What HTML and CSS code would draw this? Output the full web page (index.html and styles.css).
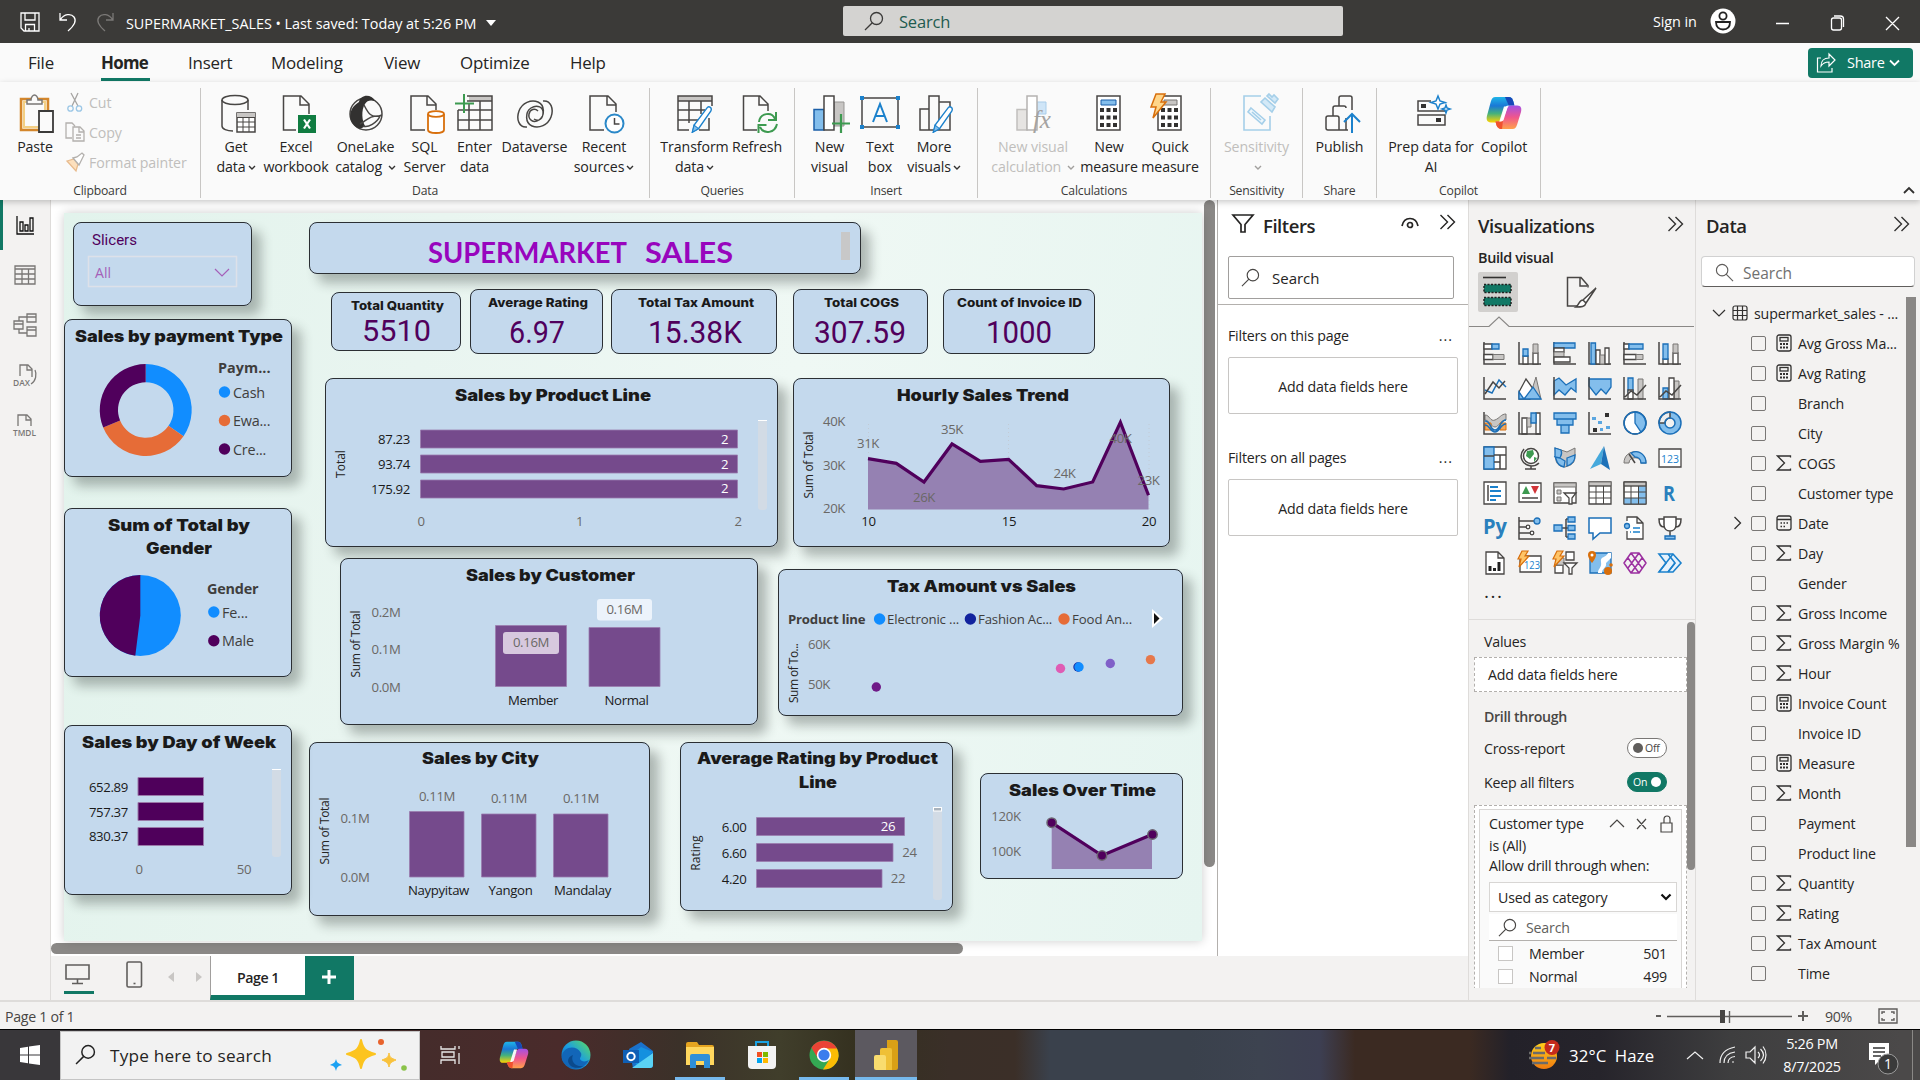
FILE: index.html
```html
<!DOCTYPE html>
<html lang="en">
<head>
<meta charset="utf-8">
<title>SUPERMARKET_SALES</title>
<link rel="stylesheet" href="styles.css">
</head>
<body>
<svg class="defs" width="0" height="0">
  <defs>
    <linearGradient id="cp1" x1="0" y1="0" x2="0" y2="1"><stop offset="0" stop-color="#1fb5e8"/><stop offset=".35" stop-color="#1a78d6"/><stop offset=".65" stop-color="#45b17c"/><stop offset="1" stop-color="#ffd400"/></linearGradient>
    <linearGradient id="cp2" x1="0" y1="0" x2="0" y2="1"><stop offset="0" stop-color="#a350e6"/><stop offset=".5" stop-color="#f0568c"/><stop offset="1" stop-color="#ffa24a"/></linearGradient>
    <linearGradient id="edge" x1="0" y1="1" x2="1" y2="0"><stop offset="0" stop-color="#0c59a4"/><stop offset=".5" stop-color="#1b9de2"/><stop offset="1" stop-color="#5fe05a"/></linearGradient>
    <linearGradient id="haze" x1="0" y1="0" x2="0" y2="1"><stop offset="0" stop-color="#ffcf1a"/><stop offset="1" stop-color="#f07a10"/></linearGradient>
    <symbol id="copilot" viewBox="0 0 38 36">
      <path d="M10 1h14c3 0 4 2 5 5l1 4h-6c-3 0-4 2-5 5l-3 9c-1 3-2 4-5 4H5c-4 0-5-3-4-7L5 6c1-3 2-5 5-5z" fill="url(#cp1)"/>
      <path d="M20 1h4c3 0 4 2 5 5l1 4h-6z" fill="#1748b8"/>
      <path d="M28 35H16c-3 0-4-2-5-4l-1-4h4c3 0 4-2 5-5l3-8c1-3 2-4 5-4h6c4 0 5 3 4 7l-4 13c-1 3-2 5-5 5z" fill="url(#cp2)"/>
      <path d="M10 27h4c2 0 3-1 4-3l-1 11c-4 0-5-2-6-4z" fill="#f0522e"/>
      <path d="M19 11h4l-4 13c0 2-2 3-5 3z" fill="#fff" opacity=".95"/>
    </symbol>
    <symbol id="mag" viewBox="0 0 20 20"><circle cx="12.5" cy="7.5" r="6"/><path d="M8.3 11.8L1 19"/></symbol>
    <symbol id="chev" viewBox="0 0 8 6"><path d="M1 1l3 3 3-3"/></symbol>
    <symbol id="dbl" viewBox="0 0 16 16"><path d="M1 1l7 7-7 7M8 1l7 7-7 7"/></symbol>
    <symbol id="calc" viewBox="0 0 16 18"><rect x="1" y="1" width="14" height="16" rx="2"/><rect x="4" y="3.5" width="8" height="3.5"/><path d="M4 10h2M7 10h2M10 10h2M4 13.5h2M7 13.5h2M10 13.5h2" stroke-width="2"/></symbol>
    <symbol id="sum" viewBox="0 0 16 18"><path d="M14.5 3.5V2h-13l7 7-7 7h13v-1.500"/></symbol>
    <symbol id="cal" viewBox="0 0 16 18"><rect x="1" y="2" width="14" height="14" rx="2"/><path d="M1 5.500h14M4.500 9h1.500M7.500 9H9M10.500 9H12M4.500 12.500h1.500M7.500 12.500H9" stroke-width="1.500"/></symbol>
    <symbol id="pencil" viewBox="0 0 24 32"><path d="M1 31l2-8L18 3c2-2 6 0 4 4L8 27z" fill="#fff" stroke="#1b81cc" stroke-width="1.600"/><path d="M1 31l2-8 5 4z" fill="#83beec" stroke="#1b81cc" stroke-width="1.200"/></symbol>
  </defs>
</svg>

<header class="titlebar">
  <svg class="tb-save" width="20" height="20" viewBox="0 0 20 20"><path d="M1 1h18v18H4l-3-3zM5 1v7h10V1M5.500 19v-6.500h9V19M9 16v3"/></svg>
  <svg class="tb-undo" width="18" height="20" viewBox="0 0 18 20"><path d="M1 1v7h7M1.500 7.500C5 2 12 1 15 5s1 8-6 14"/></svg>
  <svg class="tb-redo" width="18" height="20" viewBox="0 0 18 20"><path d="M17 1v7h-7M16.500 7.500C13 2 6 1 3 5s-1 8 6 14"/></svg>
  <span class="tb-name">SUPERMARKET_SALES • Last saved: Today at 5:26 PM</span>
  <i class="tb-caret"></i>
  <div class="tb-search"><svg width="20" height="20"><use href="#mag"/></svg><span>Search</span></div>
  <span class="tb-sign">Sign in</span>
  <svg class="tb-avatar" width="26" height="26" viewBox="0 0 26 26"><circle cx="13" cy="13" r="12.500" fill="#fff" stroke="none"/><circle cx="13" cy="8" r="3.600"/><path d="M6 14h14c0 5-3 7.500-7 7.500S6 19 6 14z"/></svg>
  <svg class="tb-win" width="126" height="16" viewBox="0 0 126 16"><path d="M1 8.500h13M56.500 5a2 2 0 0 1 2-2h6a2 2 0 0 1 2 2v8a2 2 0 0 1-2 2h-6a2 2 0 0 1-2-2zM59 1h6.500a3 3 0 0 1 3 3v8M111 2l13 13M124 2l-13 13"/></svg>
</header>

<nav class="menu">
  <span class="m1">File</span><span class="m2 active">Home</span><span class="m3">Insert</span><span class="m4">Modeling</span><span class="m5">View</span><span class="m6">Optimize</span><span class="m7">Help</span>
  <div class="share"><svg width="20" height="20" viewBox="0 0 20 20"><path d="M5 5H1.500v14H16v-4M5 13c0-5 3-8 8-8V1l6 6-6 6V9c-4 0-6 1-8 4z"/></svg><span>Share</span><svg width="13" height="9"><use href="#chev"/></svg></div>
</nav>

<section class="ribbon">
  <div class="group g-clip">
    <div class="g-body">
      <div class="rb paste"><svg width="40" height="40" viewBox="0 0 40 40"><path d="M6 5h27v31H6z" fill="#fdf3dc" stroke="#d4862b" stroke-width="2.500"/><path d="M9 8h21v25H9z" fill="#fafafa" stroke="#f3cf84" stroke-width="2"/><path d="M12 10V6h4c0-3 2-5 3.500-5S23 3 23 6h4v4z" fill="#fafafa" stroke="#797775" stroke-width="1.500"/><path d="M24 17h14v21H24z" fill="#fafafa" stroke="#3b3a39" stroke-width="1.800"/></svg><span>Paste</span></div>
      <div class="mini">
        <div><svg width="20" height="20" viewBox="0 0 20 20"><path d="M6 1l7 13M13 1L7 14" stroke="#a6a4a2"/><circle cx="5.500" cy="16.500" r="2.700" stroke="#9cc7e6"/><circle cx="14" cy="16.500" r="2.700" stroke="#9cc7e6"/></svg><span>Cut</span></div>
        <div><svg width="20" height="20" viewBox="0 0 20 20"><path d="M7 16H1V1h6l3 3M8 5h7l4 4v10H8zM14 5v5h5M11 13h5M11 16h5" stroke="#b3b0ad"/></svg><span>Copy</span></div>
        <div><svg width="20" height="20" viewBox="0 0 20 20"><path d="M2 9l7-2 4 5-2 7-9-10z" fill="#fde0bd" stroke="#e8bb8d"/><path d="M8 6l6 7 2-4 3-6-2-2-5 4z" fill="#fff" stroke="#b3b0ad"/></svg><span>Format painter</span></div>
      </div>
    </div>
    <div class="g-label">Clipboard</div>
  </div>
  <div class="group g-data">
    <div class="g-body">
      <div class="rb w56"><svg width="40" height="40" viewBox="0 0 40 40"><ellipse cx="19" cy="6" rx="13" ry="4.500" class="k"/><path d="M6 6v26c0 3 5 5 11 5M32 6v10" class="k"/><path d="M21 19h18v19H21z" class="k" fill="#fff"/><path d="M21 19h18v4H21z" fill="#c8c6c4"/><path d="M21 23.500h18M21 28h18M21 33h18M27 24v14M33 24v14" class="k t1"/></svg><span>Get</span><span>data<svg width="8" height="6"><use href="#chev"/></svg></span></div>
      <div class="rb w64"><svg width="40" height="40" viewBox="0 0 40 40"><path d="M20 36H7.500V2H25l8 8v10M24 2v9h9" class="k"/><path d="M22 21h18v18H22z" fill="#107c41"/><path d="M28 25.500l6 9M34 25.500l-6 9" stroke="#fff" stroke-width="2.200"/></svg><span>Excel</span><span>workbook</span></div>
      <div class="rb w75"><svg width="40" height="40" viewBox="0 0 40 40"><circle cx="20" cy="20" r="16" class="k"/><path d="M13 8c1-7 12-9 16-1-4-1-8-1-10 3-4 6-3 17 0 22-2 2-5 3-7 2C2 29 1 15 13 8z" fill="#323130"/><path d="M18 11c4 8 7 14 18 10M14 30c6-3 10-9 20-8-3 7-12 12-17 10" class="k"/></svg><span>OneLake</span><span>catalog <svg width="8" height="6"><use href="#chev"/></svg></span></div>
      <div class="rb w43"><svg width="40" height="40" viewBox="0 0 40 40"><path d="M20 36H6V2h17l8 8v6M22 2v9h9" class="k"/><path d="M23 20v16c0 1.500 3 3 8 3s8-1.500 8-3V20" fill="#fff" stroke="#d86f0c" stroke-width="1.800"/><ellipse cx="31" cy="20" rx="8" ry="2.800" fill="#fff" stroke="#d86f0c" stroke-width="1.800"/></svg><span>SQL</span><span>Server</span></div>
      <div class="rb w57"><svg width="40" height="40" viewBox="0 0 40 40"><path d="M14 2h23v5H14z" fill="#c8c6c4"/><path d="M12 2h25v34H3V16M12 7h25M3 16h34M3 26h34M14 10v26M25 7v29" class="k"/><path d="M9 0v19M0 9.500h19" stroke="#3d9a50" stroke-width="2"/></svg><span>Enter</span><span>data</span></div>
      <div class="rb w63"><svg width="40" height="40" viewBox="0 0 40 40" class="k"><path d="M12 33C4 34 1 25 4 17S16 5 23 8s7 14 1 18-11-1-10-6 6-6 9-3M28 7c8-1 11 8 8 16S24 35 17 32s-7-14-1-18 13-1 12 6-6 7-9 5"/></svg><span>Dataverse</span></div>
      <div class="rb w76"><svg width="40" height="40" viewBox="0 0 40 40"><path d="M20 36H6V2h18l8 8v8M23 2v9h9" class="k"/><circle cx="30.500" cy="29.500" r="9" fill="#fff" stroke="#2b88c8" stroke-width="2"/><path d="M30.500 24v6h5" class="k"/></svg><span>Recent</span><span>sources<svg width="8" height="6"><use href="#chev"/></svg></span></div>
    </div>
    <div class="g-label">Data</div>
  </div>
  <div class="group g-query">
    <div class="g-body">
      <div class="rb w71"><svg width="40" height="40" viewBox="0 0 40 40"><path d="M3 2h34v5H3z" fill="#c8c6c4"/><path d="M14 36H3V2h34v10M3 7h34M3 16h27M3 26h20M14 7v22M26 7v13M34 24v12H24" class="k"/><svg x="14" y="11" width="26" height="28"><use href="#pencil"/></svg></svg><span>Transform</span><span>data<svg width="8" height="6"><use href="#chev"/></svg></span></div>
      <div class="rb w54"><svg width="40" height="40" viewBox="0 0 40 40"><path d="M20 36H6.500V2H23l8 8v7M22 2v9h9" class="k"/><path d="M22 28c1-9 13-11 16-3M39 18v8h-8M40 30c-2 9-13 11-17 3M21.500 39v-8h8" fill="none" stroke="#3d9a50" stroke-width="2"/></svg><span>Refresh</span></div>
    </div>
    <div class="g-label">Queries</div>
  </div>
  <div class="group g-insert">
    <div class="g-body">
      <div class="rb w55"><svg width="40" height="40" viewBox="0 0 40 40"><path d="M24 8h10v24H24z" fill="#c8c6c4" stroke="#979593"/><path d="M4 15.500h10V36H4z" fill="#83beec" stroke="#1b5fa8" stroke-width="1.500"/><path d="M14 2h10v34H14z" fill="#fff" class="k"/><path d="M31 20v19M22 29.500h18" stroke="#3d9a50" stroke-width="2.200"/></svg><span>New</span><span>visual</span></div>
      <div class="rb w46"><svg width="40" height="40" viewBox="0 0 40 40"><path d="M2 4h36v29H2z" class="k"/><path d="M13 28l7-18 7 18M15.500 22h9" fill="none" stroke="#1b81cc" stroke-width="2"/><path d="M0 2h4v4H0zM36 2h4v4h-4zM0 31h4v4H0zM36 31h4v4h-4z" fill="#1b81cc"/></svg><span>Text</span><span>box</span></div>
      <div class="rb w62"><svg width="40" height="40" viewBox="0 0 40 40"><path d="M6 15h9v21H6zM15 2h10v34H15zM25 8h11v28H25z" class="k"/><svg x="16" y="11" width="26" height="28"><use href="#pencil"/></svg></svg><span>More</span><span>visuals<svg width="8" height="6"><use href="#chev"/></svg></span></div>
    </div>
    <div class="g-label">Insert</div>
  </div>
  <div class="group g-calc">
    <div class="g-body">
      <div class="rb w76 off"><svg width="40" height="40" viewBox="0 0 40 40"><path d="M24 8h9v12h-9z" fill="#cfe5f7" stroke="#a9cdea"/><path d="M4 15.500h10V36H4z" fill="#e6e4e2" stroke="#c1bfbd" stroke-width="1.500"/><path d="M14 2h10v34H14z" fill="#fff" stroke="#b5b3b1" stroke-width="1.500"/><text x="20" y="34" class="fx">fx</text></svg><span>New visual</span><span>calculation <svg width="8" height="6"><use href="#chev"/></svg></span></div>
      <div class="rb w76"><svg width="40" height="40" viewBox="0 0 40 40"><path d="M8 2h23v34H8z" fill="#fff" class="k"/><path d="M12 6h15v5H12z" fill="#83beec" stroke="#1b5fa8"/><path d="M11 16h17M11 23.500h17M11 31h17" stroke="#323130" stroke-width="4" stroke-dasharray="4 2.500"/></svg><span>New</span><span>measure</span></div>
      <div class="rb w46"><svg width="40" height="40" viewBox="0 0 40 40"><path d="M8 2h23v34H8z" fill="#fff" class="k"/><path d="M14 6h13v5H14z" fill="#c8c6c4" stroke="#797775"/><path d="M11 16h17M11 23.500h17M11 31h17" stroke="#323130" stroke-width="4" stroke-dasharray="4 2.500"/><path d="M6 0h9l-4 8h5L3 24l3-11H1z" fill="#ffd68a" stroke="#d86f0c" stroke-width="1.500"/></svg><span>Quick</span><span>measure</span></div>
    </div>
    <div class="g-label">Calculations</div>
  </div>
  <div class="group g-sens">
    <div class="g-body">
      <div class="rb w91 off"><svg width="40" height="40" viewBox="0 0 40 40" fill="none" stroke="#a5cfe9" stroke-width="1.600"><path d="M24 2H7v34h26V22"/><path d="M14 14l14 12-3 4-14-12zM15 18l9 8" fill="#edf6fc"/><path d="M24 8l10 9M28 4l10 9-3 5-11-10zM32 0l3 3 2-2 4 4-3 4-8-7z" fill="#d3e9f7"/></svg><span>Sensitivity</span><span><svg width="8" height="6"><use href="#chev"/></svg></span></div>
    </div>
    <div class="g-label">Sensitivity</div>
  </div>
  <div class="group g-share">
    <div class="g-body">
      <div class="rb w73"><svg width="40" height="40" viewBox="0 0 40 40"><path d="M6 24a2 2 0 0 1 2-2h9a2 2 0 0 1 2 2v12H8a2 2 0 0 1-2-2zM13 22V14a2 2 0 0 1 2-2h9a2 2 0 0 1 2 2M19 12V4a2 2 0 0 1 2-2h9a2 2 0 0 1 2 2v12M26 24v12M19 36h9" class="k"/><path d="M32 39V20M24 28l8-8 8 8" fill="none" stroke="#1b81cc" stroke-width="2"/></svg><span>Publish</span></div>
    </div>
    <div class="g-label">Share</div>
  </div>
  <div class="group g-cop">
    <div class="g-body">
      <div class="rb w90"><svg width="40" height="40" viewBox="0 0 40 40"><path d="M20 7H7v10h27v-3M7 21h27v10H7z" class="k"/><path d="M10 10h5v4h-5zM25 24h5v4h-5z" fill="#323130"/><path d="M27 2l2 5 5 1.500-5 1.500-2 5-2-5-5-1.500L25 7zM35 11l1 3 3 1-3 1-1 3-1-3-3-1 3-1z" fill="#fff" stroke="#1b81cc" stroke-width="1.500"/></svg><span>Prep data for</span><span>AI</span></div>
      <div class="rb w56"><svg width="40" height="40" viewBox="0 0 40 40"><use href="#copilot" x="1" y="2" width="38" height="34"/></svg><span>Copilot</span></div>
    </div>
    <div class="g-label">Copilot</div>
  </div>
  <svg class="collapse" width="12" height="8" viewBox="0 0 12 8"><path d="M1 7l5-5 5 5"/></svg>
</section>

<main class="work">
  <aside class="rail">
    <div class="on"><svg width="24" height="24" viewBox="0 0 24 24"><path d="M4 3v18h17M7 18V9h3v9zM12 18v-6h3v6zM17 18V5h3v13z"/></svg></div>
    <div><svg width="24" height="24" viewBox="0 0 24 24"><path d="M2 3h20v18H2zM2 6h20M2 11h20M2 16h20M9 6v15M15.500 6v15"/></svg></div>
    <div><svg width="24" height="24" viewBox="0 0 24 24"><path d="M1 8h9v8H1zM14 1h9v8h-9zM14 14h9v9h-9zM1 11h9M14 4h9M14 17h9M6 8V4h8M6 16v4h8"/></svg></div>
    <div><svg width="24" height="24" viewBox="0 0 24 24"><path d="M7 13V2h8l4 4v8M14 2v5h5M22 7c2 4 1 11-4 14"/><text x="0" y="23" textLength="17" lengthAdjust="spacingAndGlyphs">DAX</text></svg></div>
    <div><svg width="24" height="24" viewBox="0 0 24 24"><path d="M5 13V2h9l4 4v7M13 2v5h5"/><text x="0" y="23" textLength="23" lengthAdjust="spacingAndGlyphs">TMDL</text></svg></div>
  </aside>

  <div class="center">
    <div class="stage-row">
    <div class="stage">
      <div class="page">
        <svg class="visual v-title" viewBox="309 222 552 52"><g class="comic"><text x="428" y="263" textLength="199" lengthAdjust="spacingAndGlyphs">SUPERMARKET</text><text x="645" y="263" textLength="88" lengthAdjust="spacingAndGlyphs">SALES</text></g><path d="M841 232h9v28h-9z" fill="#c8c8c8"/></svg>
        <svg class="visual v-slicer" viewBox="73 222 179 84"><text x="92" y="245" class="din" textLength="45" lengthAdjust="spacingAndGlyphs">Slicers</text><rect x="88.500" y="256.500" width="148" height="30" fill="none" stroke="#dde1e9" stroke-width="1.500"/><text x="95" y="278" class="all" textLength="16" lengthAdjust="spacingAndGlyphs">All</text><path d="M215 269l7 7 7-7" fill="none" stroke="#a55fb8" stroke-width="1.200"/></svg>
        <svg class="visual flat v-k1" viewBox="331 292 130 59"><text x="351" y="310" class="kt" textLength="93" lengthAdjust="spacingAndGlyphs">Total Quantity</text><text x="362" y="341" class="kv" textLength="69" lengthAdjust="spacingAndGlyphs">5510</text></svg>
        <svg class="visual flat v-k2" viewBox="470 289 133 65"><text x="488" y="307" class="kt" textLength="100" lengthAdjust="spacingAndGlyphs">Average Rating</text><text x="509" y="343" class="kv" textLength="56" lengthAdjust="spacingAndGlyphs">6.97</text></svg>
        <svg class="visual flat v-k3" viewBox="611 289 166 65"><text x="638" y="307" class="kt" textLength="116" lengthAdjust="spacingAndGlyphs">Total Tax Amount</text><text x="648" y="343" class="kv" textLength="94" lengthAdjust="spacingAndGlyphs">15.38K</text></svg>
        <svg class="visual flat v-k4" viewBox="793 289 135 65"><text x="824" y="307" class="kt" textLength="75" lengthAdjust="spacingAndGlyphs">Total COGS</text><text x="814" y="343" class="kv" textLength="92" lengthAdjust="spacingAndGlyphs">307.59</text></svg>
        <svg class="visual flat v-k5" viewBox="943 289 152 65"><text x="957" y="307" class="kt" textLength="125" lengthAdjust="spacingAndGlyphs">Count of Invoice ID</text><text x="986" y="343" class="kv" textLength="66" lengthAdjust="spacingAndGlyphs">1000</text></svg>

        <svg class="visual v-prod" viewBox="325 378 453 169"><text x="455" y="401" class="t" textLength="196" lengthAdjust="spacingAndGlyphs">Sales by Product Line</text>
          <g class="dk end"><text x="410" y="444">87.23</text><text x="410" y="469">93.74</text><text x="410" y="494">175.92</text></g>
          <g class="bar"><path d="M420.500 430h317v18h-317zM420.500 455h317v18h-317zM420.500 480h317v18h-317z"/></g>
          <g class="wh mid"><text x="724.500" y="444">2</text><text x="724.500" y="469">2</text><text x="724.500" y="493">2</text></g>
          <g class="ax mid"><text x="421" y="526">0</text><text x="579.500" y="526">1</text><text x="738" y="526">2</text></g>
          <text class="rot mid" transform="translate(345 464) rotate(-90)">Total</text>
          <rect x="758" y="420" width="9" height="90" rx="3" class="sb"/><path d="M758 420.500h9" stroke="#fff"/></svg>
        <svg class="visual v-hour" viewBox="793 378 377 169"><text x="897" y="401" class="t" textLength="172" lengthAdjust="spacingAndGlyphs">Hourly Sales Trend</text>
          <path d="M868.500 424v86M1008.500 424v86M1149 424v86" stroke="#c2cbd6" stroke-dasharray="1 3"/>
          <path d="M868 509.500V458.700L896.300 463.300 924 482 952 444 980.400 461.300 1008.600 459.300 1036.700 485.700 1063.700 489 1092.700 482 1120.400 422.300 1148.500 495.300V509.500z" class="area"/>
          <path d="M868 458.700L896.300 463.300 924 482 952 444 980.400 461.300 1008.600 459.300 1036.700 485.700 1063.700 489 1092.700 482 1120.400 422.300 1148.500 495.300" class="ln"/>
          <g class="ax mid"><text x="834" y="426">40K</text><text x="834" y="470">30K</text><text x="834" y="513">20K</text><text x="868" y="448">31K</text><text x="952" y="434">35K</text><text x="924" y="502">26K</text><text x="1064.500" y="478">24K</text><text x="1120.500" y="443">40K</text><text x="1148.500" y="485">23K</text></g>
          <g class="dk mid"><text x="868.500" y="526">10</text><text x="1009" y="526">15</text><text x="1149" y="526">20</text></g>
          <text class="rot mid" transform="translate(813 465) rotate(-90)" textLength="67">Sum of Total</text></svg>

        <svg class="visual v-pay" viewBox="64 319 228 158"><text x="75" y="342" class="t" textLength="208" lengthAdjust="spacingAndGlyphs">Sales by payment Type</text>
          <g transform="translate(145.700 410)"><path d="M0-46A46 46 0 0 1 37.800 26.200L22.800 15.800A27.700 27.700 0 0 0 0-27.700z" fill="#118dff"/><path d="M37.800 26.200A46 46 0 0 1-42.500 17.500L-25.600 10.600A27.700 27.700 0 0 0 22.800 15.800z" fill="#e66c37"/><path d="M-42.500 17.500A46 46 0 0 1 0-46V-27.700A27.700 27.700 0 0 0-25.600 10.600z" fill="#50005c"/></g>
          <text x="218" y="373" class="lg b" textLength="52">Paym...</text>
          <circle cx="224.500" cy="392" r="5.700" fill="#118dff"/><circle cx="224.500" cy="420.500" r="5.700" fill="#e66c37"/><circle cx="224.500" cy="449" r="5.700" fill="#50005c"/>
          <g class="lg"><text x="233" y="398">Cash</text><text x="233" y="426">Ewa...</text><text x="233" y="455">Cre...</text></g></svg>
        <svg class="visual v-gen" viewBox="64 508 228 169"><text x="108" y="531" class="t" textLength="142" lengthAdjust="spacingAndGlyphs">Sum of Total by</text><text x="146" y="554" class="t" textLength="66" lengthAdjust="spacingAndGlyphs">Gender</text>
          <g transform="translate(140.300 615.500)"><circle r="40.500" fill="#118dff"/><path d="M0 0V-40.500A40.500 40.500 0 0 0-5 40.200z" fill="#50005c"/></g>
          <text x="207" y="594" class="lg b" textLength="51">Gender</text>
          <circle cx="213.800" cy="612" r="5.700" fill="#118dff"/><circle cx="213.800" cy="640.700" r="5.700" fill="#50005c"/>
          <g class="lg"><text x="222" y="618">Fe...</text><text x="222" y="646">Male</text></g></svg>

        <svg class="visual v-city" viewBox="309 742 341 174"><text x="422" y="764" class="t" textLength="117" lengthAdjust="spacingAndGlyphs">Sales by City</text>
          <g class="bar"><path d="M409.500 811.500h54.500v65.500h-54.500zM481.500 814h54.500v63h-54.500zM553.500 814h54.500v63h-54.500z"/></g>
          <g class="ax mid"><text x="355" y="823">0.1M</text><text x="355" y="882">0.0M</text><text x="437" y="801">0.11M</text><text x="509" y="803">0.11M</text><text x="581" y="803">0.11M</text></g>
          <g class="dk mid"><text x="438.500" y="895">Naypyitaw</text><text x="510.500" y="895">Yangon</text><text x="582.500" y="895">Mandalay</text></g>
          <text class="rot mid" transform="translate(329 831) rotate(-90)" textLength="67">Sum of Total</text></svg>
        <svg class="visual v-cust" viewBox="340 558 418 167"><text x="466" y="581" class="t" textLength="169" lengthAdjust="spacingAndGlyphs">Sales by Customer</text>
          <g class="bar"><path d="M495.500 625.500h71v61h-71zM589 627.500h71v59h-71z"/></g>
          <rect x="503" y="632" width="56" height="22" rx="3" fill="#d7c8de"/><rect x="597" y="599" width="55" height="21.500" rx="3" fill="#ecf3fb"/>
          <g class="ax mid"><text x="386" y="617">0.2M</text><text x="386" y="654">0.1M</text><text x="386" y="692">0.0M</text><text x="531" y="647">0.16M</text><text x="624.500" y="614">0.16M</text></g>
          <g class="dk mid"><text x="533" y="705">Member</text><text x="626.500" y="705">Normal</text></g>
          <text class="rot mid" transform="translate(360 644) rotate(-90)" textLength="67">Sum of Total</text></svg>
        <svg class="visual v-tax" viewBox="778 569 405 147"><text x="887" y="592" class="t" textLength="189" lengthAdjust="spacingAndGlyphs">Tax Amount vs Sales</text>
          <text x="788" y="624" class="lg s b" textLength="77">Product line</text>
          <circle cx="879.600" cy="619" r="5.700" fill="#118dff"/><circle cx="970.400" cy="619" r="5.700" fill="#12239e"/><circle cx="1064" cy="619" r="5.700" fill="#e66c37"/>
          <g class="lg s"><text x="887" y="624" textLength="72">Electronic ...</text><text x="978" y="624" textLength="74">Fashion Ac...</text><text x="1072" y="624" textLength="60">Food An...</text></g>
          <path d="M1152 609v19l11-9.500z" fill="#fff"/><path d="M1154 613v11l5.500-5.500z" fill="#111"/>
          <g class="ax mid"><text x="819" y="649">60K</text><text x="819" y="689">50K</text></g>
          <circle cx="876.300" cy="687" r="4.700" fill="#6f1a87"/><circle cx="1060.500" cy="668.500" r="4.700" fill="#df5cb4"/><circle cx="1078" cy="667" r="4.700" fill="#12239e"/><circle cx="1079" cy="667" r="4.700" fill="#118dff"/><circle cx="1110.300" cy="663.500" r="4.700" fill="#8060c8"/><circle cx="1150.500" cy="659.600" r="4.700" fill="#e6784b"/>
          <text class="rot mid" transform="translate(798 673) rotate(-90)" textLength="60">Sum of To...</text></svg>

        <svg class="visual v-day" viewBox="64 725 228 170"><text x="82" y="748" class="t" textLength="194" lengthAdjust="spacingAndGlyphs">Sales by Day of Week</text>
          <g class="dk end"><text x="128" y="792">652.89</text><text x="128" y="817">757.37</text><text x="128" y="841">830.37</text></g>
          <path d="M138 777.500h65.500v18H138zM138 802.500h65.500v18H138zM138 827.500h65.500v18H138z" fill="#4f005b" stroke="#9b79a8"/>
          <g class="ax mid"><text x="139" y="874">0</text><text x="244" y="874">50</text></g>
          <rect x="272" y="769" width="9" height="88" rx="3" class="sb"/><path d="M272 769.500h9" stroke="#fff"/></svg>
        <svg class="visual v-rate" viewBox="680 742 273 169"><text x="697" y="764" class="t" textLength="241" lengthAdjust="spacingAndGlyphs">Average Rating by Product</text><text x="799" y="788" class="t" textLength="38" lengthAdjust="spacingAndGlyphs">Line</text>
          <g class="dk end"><text x="746.500" y="832">6.00</text><text x="746.500" y="858">6.60</text><text x="746.500" y="884">4.20</text></g>
          <g class="bar"><path d="M756.500 817.500h148v18h-148zM756.500 843.500h136.500v18H756.500zM756.500 869.500h125.500v18H756.500z"/></g>
          <text x="888" y="831" class="wh mid">26</text><g class="ax mid"><text x="909.500" y="857">24</text><text x="898" y="883">22</text></g>
          <text class="rot mid" transform="translate(700 853) rotate(-90)">Rating</text>
          <rect x="933" y="808" width="9" height="92" rx="3" class="sb"/><rect x="933.500" y="807.500" width="8" height="3.500" fill="#a9b3bd" stroke="#fff"/></svg>
        <svg class="visual flat v-time" viewBox="980 773 203 106"><text x="1009" y="796" class="t" textLength="147" lengthAdjust="spacingAndGlyphs">Sales Over Time</text>
          <path d="M1051.700 869V822.700L1102 855.500 1152 834.500V869z" class="area"/><path d="M1051.700 822.700L1102 855.500 1152 834.500" class="ln"/>
          <g fill="#50005c" stroke="#6b6470" stroke-width="1.500"><circle cx="1051.700" cy="822.700" r="4.700"/><circle cx="1102" cy="855.500" r="4.700"/><circle cx="1152.500" cy="834.500" r="4.700"/></g>
          <g class="ax mid"><text x="1006" y="821">120K</text><text x="1006" y="856">100K</text></g></svg>
      </div>
      <div class="hscroll"></div>
    </div>
    <div class="vscroll"></div>
    <aside class="filters">
      <div class="f-head"><svg width="22" height="19" viewBox="0 0 22 19"><path d="M1 1h20l-8 9.500V18H9v-7.500z"/></svg><h2>Filters</h2><svg class="eye" width="18" height="12" viewBox="0 0 18 12"><path d="M1 9C3-1 15-1 17 9"/><circle cx="9" cy="8" r="2.500"/></svg><svg class="dbl" width="17" height="16"><use href="#dbl"/></svg></div>
      <div class="f-search"><svg width="19" height="19"><use href="#mag"/></svg><span>Search</span></div>
      <div class="f-line"></div>
      <div class="f-sec"><span>Filters on this page</span><b>...</b></div>
      <div class="f-box">Add data fields here</div>
      <div class="f-sec s2"><span>Filters on all pages</span><b>...</b></div>
      <div class="f-box">Add data fields here</div>
    </aside>
    </div>
    <div class="tabs">
      <div class="view"><svg width="26" height="22" viewBox="0 0 26 22"><path d="M1 1h23v14H1zM12.500 15v4M7 19.500h11"/></svg></div>
      <svg class="phone" width="17" height="27" viewBox="0 0 17 27"><rect x="1" y="1" width="14.500" height="25" rx="1.500"/><path d="M7.500 22.500h2"/></svg>
      <i class="al"></i><i class="ar"></i>
      <div class="tab">Page 1</div><div class="plus"><svg width="14" height="14" viewBox="0 0 14 14"><path d="M7 0v14M0 7h14"/></svg></div>
    </div>
  </div>

  <aside class="viz">
    <div class="p-head"><h2>Visualizations</h2><svg class="dbl" width="17" height="16"><use href="#dbl"/></svg></div>
    <h3>Build visual</h3>
    <div class="v-tabs">
      <div class="sel"><svg width="34" height="34" viewBox="0 0 34 34"><path d="M2 2.500h23" stroke="#323130" stroke-width="1.600"/><path d="M3 9.500h27v8H3zM3 22.500h27v8H3z" fill="#117865" stroke="#222" stroke-width="1.500" stroke-dasharray="2 1.500"/></svg></div>
      <svg class="brush" width="32" height="32" viewBox="0 0 32 32"><path d="M11 30H1.500V1.500H15l7 8v2M14 2v8h7" class="k"/><path d="M30 12L17 24l3 3zM17 24c-4 0-4 5-7 7 5 0 9 0 10-4" class="k" fill="#fff"/></svg>
    </div>
    <svg class="notch" width="225" height="11" viewBox="0 0 225 11"><path d="M0 10.500h20L30 1l10 9.500h185"/></svg>
    <div class="v-grid">
      <svg viewBox="0 0 24 24"><path d="M1 1v22h22" class="k"/><path d="M1 3h8v5H1z" class="w"/><path d="M9 3h7v5H9z" class="bl"/><path d="M1 13.500h9v5H1z" class="w"/><path d="M10 13.500h11v5H10z" class="g"/></svg>
      <svg viewBox="0 0 24 24"><path d="M1 1v22h22" class="k"/><path d="M5 15h5v8H5zM15 12h5v11h-5z" class="w"/><path d="M5 8h5v7H5z" class="bl"/><path d="M15 3h5v9h-5z" class="g"/></svg>
      <svg viewBox="0 0 24 24"><path d="M1 1v22h22" class="k"/><path d="M1 2h21v5H1z" class="bl"/><path d="M1 7h10v4H1z" class="w"/><path d="M1 11h10v5H1z" class="g"/><path d="M1 16h16v5H1z" class="w"/></svg>
      <svg viewBox="0 0 24 24"><path d="M1 1v22h22" class="k"/><path d="M3 2h4.500v21H3z" class="bl"/><path d="M8 9h4v14H8z" class="w"/><path d="M12 14h5v9h-5z" class="g"/><path d="M17 7h4v16h-4z" class="w"/></svg>
      <svg viewBox="0 0 24 24"><path d="M1 1v22h22" class="k"/><path d="M1 3h5v5H1zM1 13.500h12v5H1z" class="w"/><path d="M6 3h14v5H6z" class="bl"/><path d="M13 13.500h7v5h-7z" class="g"/></svg>
      <svg viewBox="0 0 24 24"><path d="M1 1v22h22" class="k"/><path d="M5 18h5v5H5zM15 12h5v11h-5z" class="w"/><path d="M5 3h5v15H5z" class="bl"/><path d="M15 3h5v9h-5z" class="g"/></svg>

      <svg viewBox="0 0 24 24"><path d="M1 1v22h22" class="k"/><path d="M2 14l7 3 7-13 7 7" class="bs"/><path d="M2 18l8-12 6 6 6-7" class="k"/></svg>
      <svg viewBox="0 0 24 24"><path d="M11 23L18 1l5 22z" class="g"/><path d="M1 16L8 3l8 11-4 9H1z" class="w"/><path d="M1 16l5 7H1zM6 23l9-12 8 12z" class="bl"/></svg>
      <svg viewBox="0 0 24 24"><path d="M1 5l5-3 7 7 10-6v13l-5-4-6 7-6-5-5 5z" class="bl"/><path d="M1 1v22h22" class="k"/></svg>
      <svg viewBox="0 0 24 24"><path d="M1 3h22v8l-5 7-5-5-5 6-7-9z" class="bl"/><path d="M1 1v22h22" class="k"/></svg>
      <svg viewBox="0 0 24 24"><path d="M15 3h5v20h-5z" class="g"/><path d="M5 2h5v14H5z" class="bl"/><path d="M5 14h5v9H5z" class="w"/><path d="M1 1v22h22M2 21l6-6 6 4 9-10" class="k"/></svg>
      <svg viewBox="0 0 24 24"><path d="M16 5h5v18h-5z" class="g"/><path d="M5 12h5v11H5z" class="bl"/><path d="M11 2h5v21h-5z" class="w"/><path d="M1 1v22h22M2 21l6-6 6 4 9-10" class="k"/></svg>

      <svg viewBox="0 0 24 24"><path d="M2 4c5 0 5 7 10 5s6-6 11-6v6c-6 0-7 7-11 7S6 9 2 9z" class="g"/><path d="M2 12h6v7H2zM17 12h6v7h-6z" fill="#f2a65a" stroke="#d86f0c"/><path d="M2 10c6 0 5 9 10 9s5-10 11-10M2 14c5 0 5 7 10 7s5-8 11-8" class="bs"/><path d="M1 1v22h22" class="k"/></svg>
      <svg viewBox="0 0 24 24"><path d="M4 7h5v16H4zM18 2h4v21h-4z" class="w"/><path d="M9 7h4v9H9z" class="g"/><path d="M13 2h5v10h-5z" class="bl"/><path d="M1 1v22h22" class="k"/></svg>
      <svg viewBox="0 0 24 24"><path d="M1 2h22v6H1zM4 8h16v6H4zM8 14h8v8H8z" class="bl"/></svg>
      <svg viewBox="0 0 24 24"><path d="M1 1v22h22" class="k"/><path d="M5 17h4v4H5zM17 2h4v4h-4z" fill="#323130"/><path d="M4 6h4v3H4zM10 10h4v3h-4zM18 15h4v3h-4zM12 17h3v3h-3z" fill="#5aa6e0"/></svg>
      <svg viewBox="0 0 24 24"><circle cx="12" cy="12" r="11" class="w"/><path d="M12 1a11 11 0 0 1 6 20l-6-9z" class="bl"/><circle cx="12" cy="12" r="11" class="bs"/></svg>
      <svg viewBox="0 0 24 24"><circle cx="12" cy="12" r="8" fill="none" stroke="#83beec" stroke-width="6"/><path d="M12 1a11 11 0 0 0-11 11h6a5 5 0 0 1 5-5z" fill="#eee" class="k"/><circle cx="12" cy="12" r="11" class="bs"/><circle cx="12" cy="12" r="5" class="bs"/></svg>

      <svg viewBox="0 0 24 24"><path d="M1 1h22v22H1z" class="w"/><path d="M1 1h10v22H1z" class="bl"/><path d="M1 10h10M11 9h12M17 9v14M11 16h6" class="k"/></svg>
      <svg viewBox="0 0 24 24"><circle cx="13" cy="10" r="7.500" fill="#fff" class="k"/><path d="M9 5l6-1 1 4-4 5-4-3zM16 11l3 1-3 4z" fill="#3d9a50"/><path d="M6 3c-6 7-2 16 7 17 4 0 6-1 8-3M13 20v3M7 23h11" class="k"/></svg>
      <svg viewBox="0 0 24 24"><path d="M2 2l6 2 6 2 8-4v8c0 7-3 9-10 11C5 20 2 17 3 10z" class="g"/><path d="M2 2l6 2c2 4-1 7-1 8l-5-1zM2 11l5 1 5 3-1 6c-5-1-7-4-8-8zM14 12l8-3c0 6-2 9-8 11z" class="bl"/></svg>
      <svg viewBox="0 0 24 24"><path d="M16 0L2 23l11-5z" fill="#45a9dc"/><path d="M16 0l6 24-9-6z" fill="#1d71b8"/></svg>
      <svg viewBox="0 0 24 24"><path d="M1 17C1 2 23 2 23 17h-5c0-7-12-7-12 0z" class="g"/><path d="M8 7c8-4 15 2 15 10h-5c0-4-3-6-6-6z" class="bl"/><path d="M6 8l6 9" class="k"/></svg>
      <svg viewBox="0 0 24 24"><path d="M1 3h22v18H1z" class="w"/><text x="3" y="17" class="n" textLength="18" lengthAdjust="spacingAndGlyphs">123</text></svg>

      <svg viewBox="0 0 24 24"><path d="M1 1h22v22H1z" class="w"/><path d="M5 4v16" class="k"/><path d="M7 6h8M7 10h11M7 15h11M7 19h6" stroke="#1b81cc" stroke-width="2"/></svg>
      <svg viewBox="0 0 24 24"><path d="M1 2h22v19H1z" class="w"/><path d="M4 13l4-8 4 8z" fill="#3d9a50"/><path d="M13 5h8l-4 8z" fill="#d13438"/><path d="M4 17h16" class="k"/></svg>
      <svg viewBox="0 0 24 24"><path d="M1 2h22v20H1z" class="w"/><path d="M1 2h22v4H1zM4 9h4v4H4zM4 16h4v4H4z" class="g"/><path d="M11 12h12l-4 5v6h-3v-6z" class="w"/></svg>
      <svg viewBox="0 0 24 24"><path d="M1 1h22v22H1z" class="w"/><path d="M1 1h22v4H1z" class="g"/><path d="M1 11h22M1 17h22M8 5v18M15.500 5v18M1 5h22" class="k t1"/></svg>
      <svg viewBox="0 0 24 24"><path d="M1 1h22v22H1z" class="w"/><path d="M15 5h8v18H1v-6h14z" fill="#83beec"/><path d="M1 1h22v4H1z" class="g"/><path d="M1 11h22M1 17h22M8 5v18M15.500 5v18M1 5h22M1 1h22v22H1z" class="k t1"/></svg>
      <svg viewBox="0 0 24 24"><text x="5" y="20" class="r" textLength="12" lengthAdjust="spacingAndGlyphs">R</text></svg>

      <svg viewBox="0 0 24 24"><text x="0" y="18" class="r" textLength="24" lengthAdjust="spacingAndGlyphs">Py</text></svg>
      <svg viewBox="0 0 24 24"><path d="M1 1v22h22M1 5h16M1 11h8M1 17h12" class="k"/><circle cx="19" cy="5" r="3" class="bl"/><circle cx="10" cy="11" r="1.800" class="w"/><circle cx="14" cy="17" r="1.800" class="w"/></svg>
      <svg viewBox="0 0 24 24"><path d="M9 12h6M13 3v18M13 3h3M13 21h3" class="k"/><path d="M1 9h8v6H1zM15 1h7v5h-7zM15 9.500h7v5h-7zM15 18h7v5h-7z" class="bl"/></svg>
      <svg viewBox="0 0 24 24"><path d="M1 2h22v15H12l-7 6v-6H1z" class="bs wf"/></svg>
      <svg viewBox="0 0 24 24"><path d="M4 5V1h10l6 6v16H4v-8M14 1v6h6" class="w"/><circle cx="4" cy="10" r="2.500" class="bl"/><path d="M10 12h7M10 16h7M7 16h1" stroke="#1b81cc" stroke-width="1.600"/></svg>
      <svg viewBox="0 0 24 24"><path d="M6 1h12v8c0 8-12 8-12 0zM6 3H1c0 7 3 8 5 8M18 3h5c0 7-3 8-5 8M12 15v5" class="k" fill="#fff"/><path d="M7 20h10v3H7z" class="bl"/></svg>

      <svg viewBox="0 0 24 24"><path d="M3 1h12l6 6v16H3zM15 1v6h6" class="w"/><path d="M7 20v-5M11.500 20v-3M16 20v-9" stroke="#222" stroke-width="3"/></svg>
      <svg viewBox="0 0 24 24"><path d="M2 5h21v16H2z" class="w"/><text x="6" y="18" class="n" textLength="16" lengthAdjust="spacingAndGlyphs">123</text><path d="M4 0h6l-3 5h4L1 16l2-8H0z" class="o"/></svg>
      <svg viewBox="0 0 24 24"><path d="M13 1h8v8h-8zM2 14h8v8H2z" class="w"/><path d="M4 7h7v7H4z" class="g"/><path d="M11 12h13l-5 5v6h-3v-6z" class="w"/><path d="M4 0h6l-3 5h4L1 16l2-8H0z" class="o"/></svg>
      <svg viewBox="0 0 24 24"><path d="M2 2h21v20H2z" class="bl"/><path d="M20 2c-2 5-8 3-7 9s-3 6-3 11h4c0-5 5-5 4-10l5-5V2z" fill="#fff"/><path d="M0 4a4 4 0 0 1 8 0c0 3-4 8-4 8S0 7 0 4z" fill="#d86f0c"/><circle cx="20" cy="20" r="4" fill="#d86f0c"/><circle cx="23" cy="14" r="1.800" fill="#d86f0c"/><circle cx="4" cy="4" r="1.500" fill="#fff"/></svg>
      <svg viewBox="0 0 24 24" fill="none" stroke="#9b30a0" stroke-width="1.500" stroke-linejoin="round"><path d="M8 2h8l7 10-7 10H8L1 12zM8 2l11 15M16 2L5 17M5 7l11 15M19 7L8 22"/></svg>
      <svg viewBox="0 0 24 24"><path d="M1 3h9l7 9-7 9H1l7-9zM9 3h6l8 9-8 9H9" fill="#e6f2fc" stroke="#1b81cc" stroke-width="1.600"/><path d="M1 21L15 3M10 21l7-9" stroke="#1b81cc" stroke-width="1.500"/></svg>
    </div>
    <div class="v-more">...</div>
    <div class="v-fields">
      <div class="vf-col">
        <p class="lbl">Values</p>
        <div class="dash">Add data fields here</div>
        <p class="lbl dt">Drill through</p>
        <div class="opt"><span>Cross-report</span><span class="tog"><i></i>Off</span></div>
        <div class="opt"><span>Keep all filters</span><span class="tog on">On<i></i></span></div>
        <div class="drill"><div class="d-card">
          <div class="d-top"><span>Customer type</span><svg width="64" height="18" viewBox="0 0 64 18"><path d="M1 12l7-7 7 7M28 4l9 10M37 4l-9 10M52 8h11v9H52zM55 8V4c0-4 6-4 6 0v4"/></svg></div>
          <p>is (All)</p><p class="al2">Allow drill through when:</p>
          <div class="select"><span>Used as category</span><svg width="12" height="9"><use href="#chev"/></svg></div>
          <div class="d-search"><svg width="19" height="19"><use href="#mag"/></svg><span>Search</span></div>
          <div class="ck"><i></i><span>Member</span><b>501</b></div>
          <div class="ck"><i></i><span>Normal</span><b>499</b></div>
        </div></div>
      </div>
      <div class="v-scroll"></div>
    </div>
  </aside>

  <aside class="data">
    <div class="p-head"><h2>Data</h2><svg class="dbl" width="17" height="16"><use href="#dbl"/></svg></div>
    <div class="d-find"><svg width="19" height="19" class="flip"><use href="#mag"/></svg><span>Search</span></div>
    <div class="d-body">
      <div class="tree">
        <div class="root"><svg width="14" height="9" viewBox="0 0 14 9"><path d="M1 1l6 6 6-6"/></svg><svg width="16" height="16" viewBox="0 0 16 16" class="tbl"><rect x="1" y="1" width="14" height="14" rx="2"/><path d="M1 5.500h14M1 10.500h14M5.500 1v14M10.500 1v14"/></svg><span>supermarket_sales - ...</span></div>
        <div class="row"><i></i><svg><use href="#calc"/></svg><span>Avg Gross Ma...</span></div>
        <div class="row"><i></i><svg><use href="#calc"/></svg><span>Avg Rating</span></div>
        <div class="row"><i></i><svg></svg><span>Branch</span></div>
        <div class="row"><i></i><svg></svg><span>City</span></div>
        <div class="row"><i></i><svg><use href="#sum"/></svg><span>COGS</span></div>
        <div class="row"><i></i><svg></svg><span>Customer type</span></div>
        <div class="row exp"><svg class="ex" viewBox="0 0 8 14"><path d="M1 1l6 6-6 6"/></svg><i></i><svg><use href="#cal"/></svg><span>Date</span></div>
        <div class="row"><i></i><svg><use href="#sum"/></svg><span>Day</span></div>
        <div class="row"><i></i><svg></svg><span>Gender</span></div>
        <div class="row"><i></i><svg><use href="#sum"/></svg><span>Gross Income</span></div>
        <div class="row"><i></i><svg><use href="#sum"/></svg><span>Gross Margin %</span></div>
        <div class="row"><i></i><svg><use href="#sum"/></svg><span>Hour</span></div>
        <div class="row"><i></i><svg><use href="#calc"/></svg><span>Invoice Count</span></div>
        <div class="row"><i></i><svg></svg><span>Invoice ID</span></div>
        <div class="row"><i></i><svg><use href="#calc"/></svg><span>Measure</span></div>
        <div class="row"><i></i><svg><use href="#sum"/></svg><span>Month</span></div>
        <div class="row"><i></i><svg></svg><span>Payment</span></div>
        <div class="row"><i></i><svg></svg><span>Product line</span></div>
        <div class="row"><i></i><svg><use href="#sum"/></svg><span>Quantity</span></div>
        <div class="row"><i></i><svg><use href="#sum"/></svg><span>Rating</span></div>
        <div class="row"><i></i><svg><use href="#sum"/></svg><span>Tax Amount</span></div>
        <div class="row"><i></i><svg></svg><span>Time</span></div>
      </div>
      <div class="d-scroll"></div>
    </div>
  </aside>
</main>

<footer class="status"><span>Page 1 of 1</span><svg width="152" height="20" viewBox="0 0 152 20"><path d="M0 10h5" stroke-width="2"/><path d="M11 10.500h125M73.500 5v12"/><path d="M64 4h5v13h-5z" fill="#484644" stroke="none"/><path d="M142 10h10M147 5v10" stroke-width="2"/></svg><span class="pct">90%</span><svg width="20" height="16" viewBox="0 0 20 16" class="fit"><path d="M1 1h18v14H1z"/><path d="M4 6V4h3M13 4h3v2M4 10v2h3M13 12h3v-2"/></svg></footer>

<footer class="taskbar">
  <div class="start"><svg width="20" height="20" viewBox="0 0 20 20"><path d="M0 3l8-1.300V9.500H0zM9 1.500L20 0v9.500H9zM0 10.500h8v7.800L0 17zM9 10.500h11V20L9 18.500z" fill="#fff"/></svg></div>
  <div class="t-search"><svg width="21" height="21" class="m"><use href="#mag"/></svg><span>Type here to search</span>
    <svg width="78" height="32" viewBox="0 0 78 32"><path d="M30 1c2 9 4 11 14 14-10 3-12 5-14 14-2-9-4-11-14-14 10-3 12-5 14-14z" fill="#fcc41f" stroke="#fcc41f" stroke-width="2" stroke-linejoin="round"/><path d="M58 14c1 5 2 5 7 7-5 2-6 3-7 7-1-4-2-5-7-7 5-2 6-2 7-7z" fill="#f9c23c" stroke="#f9c23c"/><path d="M5 20c1 4 2 4 6 6-4 1-5 2-6 6-1-4-2-5-6-6 4-2 5-2 6-6z" fill="#1ba1f2"/><circle cx="50" cy="3" r="3" fill="#e8632d"/><circle cx="73" cy="29" r="2.800" fill="#8bc34a"/></svg></div>
  <svg class="tv" width="22" height="20" viewBox="0 0 22 20"><path d="M1 1v3h14V1M1 19v-4h14v4M2 7h12v5H2zM19 1v3M19 8v11"/></svg>
  <div class="apps">
    <div><svg width="30" height="28"><use href="#copilot"/></svg></div>
    <div><svg width="30" height="30" viewBox="0 0 30 30"><circle cx="15" cy="15" r="14.500" fill="url(#edge)"/><path d="M1 16c1-9 14-12 19-3 1 3-1 4-1 6 1 3 6 3 9 1-4 8-13 11-20 7C3 24 0 20 1 16z" fill="#1266b8"/><path d="M12 15c-3 6 3 13 11 11-8 4-15 1-16-5 0-3 2-5 5-6z" fill="#0b4a8c"/></svg></div>
    <div><svg width="30" height="28" viewBox="0 0 30 28"><path d="M6 8L18 1l12 9v14a3 3 0 0 1-3 3H10z" fill="#1a72cc"/><path d="M8 14l10-8 12 5-16 14z" fill="#1490df"/><path d="M30 12v12a3 3 0 0 1-3 3H9z" fill="#5ad3f5"/><path d="M0 9h16v13H0z" fill="#0f5fb5"/><circle cx="8" cy="15.500" r="3.700" fill="none" stroke="#fff" stroke-width="2"/></svg></div>
    <div><svg width="30" height="26" viewBox="0 0 30 26"><path d="M1 2a2 2 0 0 1 2-2h9l2 3h13a2 2 0 0 1 2 2v17H1z" fill="#e5a420"/><path d="M1 5h28v18H1z" fill="#ffd75e"/><path d="M5 26V14a2 2 0 0 1 2-2h16a2 2 0 0 1 2 2v12h-6v-7h-8v7z" fill="#2f8fd8"/></svg></div>
    <div><svg width="30" height="30" viewBox="0 0 30 30"><path d="M9 7V2h12v5" fill="none" stroke="#1ba1e2" stroke-width="2"/><path d="M1 6h28v19a4 4 0 0 1-4 4H5a4 4 0 0 1-4-4z" fill="#f3f3f3"/><path d="M10 12h5v5h-5z" fill="#f25022"/><path d="M16 12h5v5h-5z" fill="#7fba00"/><path d="M10 18h5v5h-5z" fill="#00a4ef"/><path d="M16 18h5v5h-5z" fill="#ffb900"/></svg></div>
    <div><svg width="30" height="30" viewBox="0 0 30 30"><circle cx="15" cy="15" r="14.500" fill="#34a853"/><path d="M2.500 7.800a14.500 14.500 0 0 1 25 0L28 9H15L9 18.500z" fill="#ea4335"/><path d="M15 8.500h13A14.500 14.500 0 0 1 14 29.500l7-11z" fill="#fbbc04"/><circle cx="15" cy="15" r="7.200" fill="#fff"/><circle cx="15" cy="15" r="5.600" fill="#3b7ded"/></svg></div>
    <div class="sel"><svg width="24" height="30" viewBox="0 0 24 30"><path d="M13 0h9a2 2 0 0 1 2 2v26a2 2 0 0 1-2 2h-9z" fill="#d9a016"/><path d="M6 10a2 2 0 0 1 2-2h8a2 2 0 0 1 2 2v20H6z" fill="#efc036"/><path d="M0 17a2 2 0 0 1 2-2h8a2 2 0 0 1 2 2v13H2a2 2 0 0 1-2-2z" fill="#f9dc6e"/></svg></div>
  </div>
  <div class="tray">
    <svg class="hz" width="32" height="30" viewBox="0 0 32 30"><circle cx="15" cy="16" r="13" fill="url(#haze)"/><path d="M6 8h6M4 13h12M0 18h15M18 18h9M3 23h16M0 13h2" stroke="#6b6b6b" stroke-width="2.500"/><circle cx="23" cy="7.500" r="7.500" fill="#c42b1c"/><text x="23" y="11.500">7</text></svg>
    <span class="w1">32°C&ensp;Haze</span>
    <svg class="ic" width="80" height="20" viewBox="0 0 80 20"><path d="M1 14l8-7 8 7M34 18c0-8 5-14 15-16M38 18c0-6 4-10 11-11M42 18c0-4 2-6 7-6.500M46 17h2M60 7v6h4l5 5V2l-5 5zM72 7c2 2 2 4 0 6M74.500 4c4 4 4 8 0 12M77 1.500c4 5 4 12 0 17"/></svg>
    <div class="clock"><span>5:26 PM</span><span>8/7/2025</span></div>
    <svg class="nt" width="32" height="34" viewBox="0 0 32 34"><path d="M1 2h20v17H12l-5 5v-5H1z" fill="#fff"/><path d="M5 7h12M5 11h12M5 15h8" stroke="#333" stroke-width="1.500"/><circle cx="20" cy="23" r="10" fill="#3a3a3a" stroke="#9a9a9a"/><text x="20" y="28">1</text></svg>
  </div>
</footer>
</body>
</html>
```
FILE: styles.css
```css
*{box-sizing:border-box}
body{margin:0;width:1920px;height:1080px;overflow:hidden;display:flex;flex-direction:column;font-family:"Open Sans","Noto Sans",sans-serif;font-size:14.5px;color:#252423;background:#f3f2f1;white-space:nowrap}
.defs{display:block;position:absolute}
svg{display:block;flex:none;overflow:visible}
h2,h3,p{margin:0}
i,b{font-style:normal;font-weight:inherit}
use{fill:none}

.titlebar{height:43px;flex:none;background:#3b3a38;color:#fff;display:flex;align-items:center;fill:none;stroke-width:1.3}
.titlebar>svg{stroke:#fff;fill:none}
.tb-save{margin-left:20px}
.tb-undo{margin-left:19px}
.tb-redo{margin-left:19px}
.titlebar>.tb-redo{stroke:#7b7977}
.tb-name{margin:4px 0 0 12px;width:351px;font-size:14.4px;letter-spacing:-.03px}
.tb-caret{margin:2px 0 0 9px;border:5px solid transparent;border-top:6px solid #fff;border-bottom:0}
.tb-search{margin:0 0 1px 347px;width:500px;height:30px;border-radius:2px;background:#d4d3d1;display:flex;align-items:center;padding-left:21px;gap:15px;color:#1f5b4f;font-size:16.5px;letter-spacing:-.2px;stroke:#3b3a39}
.tb-search span,.share span{stroke:none}
.tb-sign{margin:0 0 1px 310px;width:47px;font-size:14.4px;letter-spacing:-.1px}
.tb-avatar{margin:0 0 1px 10px}
.titlebar>.tb-avatar{stroke:#222;stroke-width:1.8}
.tb-win{margin:3px 0 0 39px}

.menu{height:39px;flex:none;background:#fafafa;display:flex;align-items:flex-start;font-size:16.9px;letter-spacing:-.2px;padding-top:5px}
.menu span{line-height:30px;height:33px}
.m1{margin-left:28px;width:73px}.m2{width:49px}.m3{margin-left:38px;width:83px}.m4{width:113px}.m5{width:76px}.m6{width:110px}.m7{width:60px}
.menu .active{font-weight:700;letter-spacing:-.7px;border-bottom:3px solid #117865}
.share{margin-left:1178px;width:105px;height:30px;background:#117865;border-radius:4px;color:#fff;display:flex;align-items:center;font-size:14.5px;fill:none;stroke:#fff;stroke-width:1.2;padding-left:8px}
.menu .share span{margin:0 4px 0 11px;height:30px;letter-spacing:-.3px}

.ribbon{height:118px;flex:none;background:#fafafa;display:flex;padding-top:6px;box-shadow:0 2px 6px rgba(0,0,0,.22);position:relative;z-index:2}
.group{height:110px;border-right:1px solid #c8c6c4;display:flex;flex-direction:column}
.g-clip{width:201px}.g-data{width:449px;padding-left:7px}.g-query{width:145px;padding-left:9px}.g-insert{width:183px;padding-left:7px}.g-calc{width:233px;padding-left:17px}.g-sens{width:92px}.g-share{width:74px}.g-cop{width:164px;padding-left:9px}
.g-body{display:flex;height:96px;padding-top:6px}
.g-label{text-align:center;font-size:12.2px;line-height:15px;letter-spacing:-.2px;color:#3b3a39}
.g-data .g-label{padding-right:7px}.g-query .g-label{padding-right:9px}.g-insert .g-label{padding-right:7px}.g-calc .g-label{padding-right:17px}.g-cop .g-label{padding-right:9px}
.rb{display:flex;flex-direction:column;align-items:center;font-size:14.2px;letter-spacing:-.1px;line-height:20px}
.rb>span{height:20px}
.rb>svg{margin-bottom:3px}
.rb span svg{display:inline-block;margin:0 0 1px 2px;fill:none;stroke:#323130;stroke-width:1.4}
.off{color:#c0bebc}
.rb.off span svg{stroke:#a19f9d}
.w43{width:43px}.w46{width:46px}.w54{width:54px}.w55{width:55px}.w56{width:56px}.w57{width:57px}.w62{width:62px}.w63{width:63px}.w64{width:64px}.w71{width:71px}.w73{width:73px}.w75{width:75px}.w76{width:76px}.w90{width:90px}.w91{width:91px}
.paste{margin-left:15px;width:40px}
.mini{color:#c0bebc;font-size:14.2px;letter-spacing:-.1px;margin:-7px 0 0 10px}
.mini div{display:flex;height:30px;align-items:center;gap:4px}
.mini svg{fill:none;stroke-width:1.3}
.k{stroke:#484644;stroke-width:1.5}
.k:not([fill]){fill:none}
.k.t1,.t1{stroke-width:1}
.fx{font:italic 25px "Liberation Serif",serif;fill:#a5a3a1}
.collapse{margin:98px 0 0 362px;fill:none;stroke:#323130;stroke-width:1.8}

.work{height:800px;flex:none;display:flex}
.rail{width:51px;background:#f3f2f1;border-right:1px solid #dedcda;fill:none;stroke:#797775;stroke-width:1.3}
.rail div{height:50px;display:flex;align-items:center;padding-left:13px}
.rail .on{border-left:3px solid #117865;padding-left:10px;stroke:#111}
.rail text{font:600 9.500px "Open Sans",sans-serif;fill:#797775;stroke:none}
.center{width:1417px;display:flex;flex-direction:column}
.stage-row{height:756px;display:flex;background:#fff}
.stage{width:1151px;display:flex;flex-direction:column}
.page{margin:13px 0 0 13px;width:1138px;height:728px;position:relative;background:linear-gradient(100deg,#e2f3ec 0,#e9f5f0 30%,#eff8f4 60%,#e6f5f0 100%);box-shadow:0 0 10px rgba(0,0,0,.2)}
.hscroll{width:912px;height:11px;margin-top:2px;border-radius:6px;background:#8a8886}
.vscroll{width:11px;height:667px;margin-left:2px;background:#8a8886;border-radius:6px}

/* report visuals sit freely on the report canvas */
.visual{position:absolute;background:#c4d9ed;border-radius:8px;outline:1.400px solid #2b2f33;outline-offset:-1px;box-shadow:9px 9px 12px rgba(40,50,45,.33)}
.flat{box-shadow:none}
.v-slicer{left:9px;top:9px;width:179px;height:84px}
.v-title{left:245px;top:9px;width:552px;height:52px}
.v-k1{left:267px;top:79px;width:130px;height:59px}
.v-k2{left:406px;top:76px;width:133px;height:65px}
.v-k3{left:547px;top:76px;width:166px;height:65px}
.v-k4{left:729px;top:76px;width:135px;height:65px}
.v-k5{left:879px;top:76px;width:152px;height:65px}
.v-pay{left:0;top:106px;width:228px;height:158px}
.v-gen{left:0;top:295px;width:228px;height:169px}
.v-prod{left:261px;top:165px;width:453px;height:169px}
.v-hour{left:729px;top:165px;width:377px;height:169px}
.v-cust{left:276px;top:345px;width:418px;height:167px}
.v-tax{left:714px;top:356px;width:405px;height:147px}
.v-day{left:0;top:512px;width:228px;height:170px}
.v-city{left:245px;top:529px;width:341px;height:174px}
.v-rate{left:616px;top:529px;width:273px;height:169px}
.v-time{left:916px;top:560px;width:203px;height:106px}
.visual .t{font:900 16px Inter,sans-serif;fill:#1a1a1a}
.visual .kt{font:800 12px Inter,sans-serif;fill:#1a1a1a}
.visual .kv{font:400 31px Roboto,sans-serif;fill:#50005c}
.v-k1 .kv{font-size:30px}
.comic{font:700 28px Lato,"Open Sans",sans-serif;fill:#9805bd}
.din{font:15px Roboto,sans-serif;fill:#50005c}
.all{font-size:15px;fill:#a55fb8}
.dk,.ax,.wh{font-size:13.2px;letter-spacing:-.35px}
.dk{fill:#1a1a1a}.ax{fill:#6a6866}.wh{fill:#fff}
.mid{text-anchor:middle}.end{text-anchor:end}
.lg{font-size:14.400px;fill:#3f3e3d;letter-spacing:-.2px}
.lg.s{font-size:13.200px}
.b{font-weight:700;letter-spacing:-.5px}
.rot{font-size:12px;fill:#252423}
.bar{fill:#754a8c;stroke:#9a7cae;stroke-width:.8}
.sb{fill:#d2dbe5}
.area{fill:#9581b2}
.ln{fill:none;stroke:#50005c;stroke-width:3.200}

.filters{margin-left:2px;width:251px;background:#fff;border-left:1px solid #b3b0ad;padding-left:10px}
.f-head{display:flex;height:34px;padding:14px 0 0 4px;fill:none;stroke:#252423;stroke-width:1.700}
h2{font-size:18.500px;font-weight:600;letter-spacing:-.45px;line-height:23px;stroke:none}
.f-head h2{margin:0 84px 0 9px;width:54px}
.f-head .eye{margin-top:3px}
.f-head svg.dbl{margin:0 0 0 20px;stroke-width:1.400}
.f-search{margin-top:22px;width:226px;height:43px;border:1px solid #a19f9d;border-radius:2px;display:flex;align-items:center;padding-left:12px;gap:12px;font-size:15px;stroke:#484644;stroke-width:1.200}
.f-search span,.d-search span,.d-find span,.t-search span{stroke:none}
.f-line{margin:5px 0 0 -10px;height:1px;background:#b3b0ad}
.f-sec{display:flex;justify-content:space-between;width:225px;margin-top:20px;height:22px;line-height:22px;letter-spacing:-.2px;font-size:14.200px}
.f-sec b{letter-spacing:1px}
.f-box{margin-top:10px;width:230px;height:57px;border:1px solid #c8c6c4;border-radius:2px;display:flex;align-items:center;justify-content:center;font-size:14.200px;letter-spacing:-.15px;padding-top:1px}
.f-sec.s2{margin-top:33px}

.tabs{height:44px;display:flex;background:#f3f2f1;align-items:flex-start;fill:none;stroke:#605e5c;stroke-width:1.600}
.view{margin:8px 0 0 13px;width:30px;height:30px;border-bottom:3px solid #117865;padding-left:1px}
.phone{margin:5px 0 0 32px}
.al,.ar{margin:16px 0 0 25px;border:5px solid transparent;border-right:6px solid #c8c6c4;border-left:0}
.ar{margin-left:22px;border-left:6px solid #c8c6c4;border-right:0}
.tab{margin-left:8px;width:95px;height:44px;background:#fff;border-left:1px solid #a19f9d;border-bottom:5px solid #117865;text-align:center;line-height:44px;font-size:14.200px;font-weight:600;letter-spacing:-.5px}
.plus{width:49px;height:44px;background:#117865;padding:14px 0 0 17px;stroke:#fff;stroke-width:3}

.viz{width:227px;border-left:1px solid #dedcda;background:#f3f2f1}
.p-head{display:flex;justify-content:space-between;padding:14px 10px 0 9px;fill:none;stroke:#323130;stroke-width:1.400;height:48px}
.viz .p-head{padding-right:11px}
.p-head svg{margin-top:2px}
.viz h3{padding-left:9px;font-size:14.400px;font-weight:600;letter-spacing:-.35px;line-height:20px}
.v-tabs{display:flex;margin:4px 0 0 9px}
.v-tabs .sel{width:40px;height:40px;background:#d2d0ce;border-radius:2px;padding:3px}
.brush{margin:4px 0 0 48px}
.notch{margin-top:4px;fill:none;stroke:#8a8886;stroke-width:1.200}
.v-grid{display:grid;grid-template-columns:repeat(6,35px);grid-auto-rows:35px;margin:8px 0 0 8px;place-items:center}
.v-grid svg{width:24px;height:24px}
.bl{fill:#83beec;stroke:#1b6fb8;stroke-width:1.300}
.g{fill:#c8c6c4;stroke:#797775;stroke-width:1}
.w{fill:#fff;stroke:#484644;stroke-width:1.300}
.bs{fill:none;stroke:#1b6fb8;stroke-width:1.500}
.wf{fill:#fff}
.o{fill:#ffc466;stroke:#d86f0c;stroke-width:1.200}
.n{font-size:11px;fill:#1b81cc}
.r{font:700 21px "Open Sans",sans-serif;fill:#2a80bd}
.v-more{padding-left:15px;height:39px;font-size:19px;letter-spacing:1.500px;line-height:22px}
.v-fields{border-top:1px solid #dedcda;display:flex;height:369px;overflow:hidden}
.vf-col{width:218px;padding-left:5px}
.v-scroll{width:8px;height:248px;margin-top:2px;border-radius:4px;background:#8a8886}
.lbl{padding:11px 0 0 10px;line-height:22px;font-size:14.200px;height:37px;letter-spacing:-.2px}
.dash{width:213px;height:35px;background:#fff;border:1px dashed #b3b0ad;line-height:34px;padding-left:13px;font-size:14.200px;letter-spacing:-.15px}
.dt{font-weight:600;color:#484644;padding-top:14px;height:39px;letter-spacing:-.35px}
.opt{display:flex;justify-content:space-between;align-items:center;height:34px;padding:0 20px 0 10px;font-size:14.200px;letter-spacing:-.2px}
.tog{width:40px;height:20px;border:1px solid #797775;border-radius:10px;background:#fff;display:flex;align-items:center;font-size:10.500px;padding-left:5px;gap:2px;color:#484644}
.tog i{width:10px;height:10px;border-radius:5px;background:#605e5c}
.tog.on{background:#117865;border-color:#117865;color:#fff}
.tog.on i{background:#fff;margin-left:2px}
.drill{margin-top:6px;width:213px;height:210px;border:1px dashed #b3b0ad;background:#fff;padding:3px 4px}
.d-card{height:200px;border:1px solid #d8d6d4;background:#fafafa;padding:1px 5px 0 9px;font-size:14.200px;letter-spacing:-.2px}
.d-top{display:flex;justify-content:space-between;height:25px;align-items:center;fill:none;stroke:#484644;stroke-width:1.200;padding-right:3px}
.d-top span,.select span{stroke:none}
.d-card p{line-height:20px}
.select{margin-top:6px;width:188px;height:30px;border:1px solid #d8d6d4;background:#fff;display:flex;align-items:center;justify-content:space-between;padding:0 4px 0 8px;fill:none;stroke:#111;stroke-width:1.500;margin-bottom:2px}
.d-search{width:188px;height:27px;background:#fff;border-bottom:1px solid #b3b0ad;display:flex;align-items:center;padding-left:9px;gap:9px;color:#605e5c;stroke:#484644;stroke-width:1.200}
.ck{display:flex;align-items:center;height:23px;padding:2px 9px 0 9px}
.ck i{width:15px;height:15px;border:1px solid #c8c6c4;background:#fff;margin-right:16px}
.ck b{margin-left:auto}

.data{width:225px;border-left:1px solid #dedcda;background:#f3f2f1}
.data .p-head{height:56px;padding-left:10px}
.d-find{margin-left:5px;width:214px;height:31px;border:1px solid #d1d1d1;border-bottom:1px solid #605e5c;border-radius:4px;background:#fff;display:flex;align-items:center;padding:2px 0 0 13px;gap:9px;color:#707070;font-size:15.500px;stroke:#605e5c;stroke-width:1.200}
.flip{transform:scaleX(-1)}
.d-body{display:flex;padding-top:10px;height:713px}
.tree{width:210px;padding-top:1px}
.root{height:30px;display:flex;align-items:center;padding-left:16px;fill:none;stroke:#323130;stroke-width:1.200}
.root span{margin-left:6px;stroke:none;fill:none}
.tbl{margin-left:6px}
.root span,.row span{font-size:14.200px;letter-spacing:-.15px}
.row{height:30px;display:flex;align-items:center;padding-left:55px}
.row i{width:15px;height:15px;border:1px solid #797775;border-radius:2px}
.row svg{width:16px;height:18px;margin:0 6px 0 10px;fill:none;stroke:#323130;stroke-width:1.300}
.row.exp{padding-left:37px}
.row svg.ex{width:9px;height:14px;margin:0 9px 0 0}
.d-scroll{width:10px;height:550px;background:#8a8886}

.status{height:30px;flex:none;border-top:2px solid #dedcda;border-bottom:1px solid #000;display:flex;align-items:center;color:#484644;font-size:14.200px;letter-spacing:-.3px;padding:1px 0 0 5px;fill:none;stroke:#605e5c;stroke-width:1.400}
.status span:first-child{width:1651px;stroke:none}
.status .pct{margin:0 0 0 17px;width:53px;stroke:none}

.taskbar{height:50px;flex:none;display:flex;align-items:center;color:#fff;background:linear-gradient(90deg,#39373a 0,#39373a 60px,#452c2b 420px,#4a2b2b 560px,#3b3129 680px,#403e2b 780px,#34301f 860px,#3a2f28 950px,#3b2f28 1015px,#3a414c 1050px,#3a414c 1190px,#3d4350 1260px,#3d3f52 1320px,#3b2a22 1355px,#3b2a22 1470px,#232129 1510px,#26242b 1600px,#3e3e3f 1730px,#4b4949 1900px)}
.start{width:60px;padding-left:20px}
.t-search{width:360px;height:49px;background:#f2f2f2;border:1px solid #c5c5c5;display:flex;align-items:center;color:#252423;font-size:17.2px;letter-spacing:.2px}
.t-search .m{margin:0 0 2px 14px;fill:none;stroke:#222;stroke-width:1.400}
.t-search span{margin:0 0 0 14px;width:221px}
.tv{margin-left:20px;fill:none;stroke:#e8e8e8;stroke-width:1.300}
.apps{display:flex;margin-left:21px;height:50px}
.apps div{width:62px;display:flex;align-items:center;justify-content:center;border-bottom:3px solid transparent;border-top:3px solid transparent}
.apps div:nth-child(4){background:linear-gradient(#76b9ed,#76b9ed) 6px 100%/50px 3px no-repeat border-box}
.apps div:nth-child(6){background:linear-gradient(#76b9ed,#76b9ed) 6px 100%/50px 3px no-repeat border-box}
.apps div.sel{background:#5c5960;border-top-color:#5c5960;border-bottom-color:#76b9ed}
.tray{margin-left:612px;display:flex;align-items:center;height:50px;border-right:1px solid #8a8886;width:384px}
.hz text{font:700 11px "Open Sans",sans-serif;fill:#fff;text-anchor:middle}
.w1{margin-left:8px;width:117px;font-size:16.800px;letter-spacing:.1px}
.ic{fill:none;stroke:#f0f0f0;stroke-width:1.200}
.clock{margin-left:7px;width:78px;text-align:center;font-size:14.400px;letter-spacing:-.3px;display:flex;flex-direction:column;line-height:23px}
.nt{margin:6px 0 0 17px}
.nt text{font-size:14px;fill:#fff;text-anchor:middle}
```
